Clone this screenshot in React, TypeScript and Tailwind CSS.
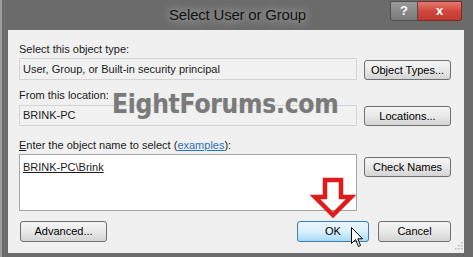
import type { ReactNode } from "react";

function WinButton({ children, className = "", primary = false }: { children: ReactNode; className?: string; primary?: boolean }) {
  return (
    <div
      className={`flex items-center justify-center rounded-[3px] border text-[11px] text-black ${
        primary
          ? "border-[#3c7fb1] bg-gradient-to-b from-[#eaf6fd] via-[#d9f0fc] to-[#a7d9f5]"
          : "border-[#707070] bg-gradient-to-b from-[#f5f5f5] via-[#e9e9e9] to-[#d4d4d4]"
      } ${className}`}
    >
      {children}
    </div>
  );
}

export default function App() {
  return (
    <div className="relative h-[257px] w-[473px] overflow-hidden bg-[#6b6b6b] font-['Liberation_Sans',Arial,sans-serif]">
      {/* title bar */}
      <div className="grid h-[30px] grid-cols-[1fr_auto_1fr] border-l-[2px] border-[#9c9c9c]">
        <div />
        <div className="self-center text-[15px] tracking-[-0.2px] text-[#141414] [text-shadow:0_0_8px_rgba(200,200,200,0.9),0_0_14px_rgba(170,170,170,0.8)]">
          Select User or Group
        </div>
        <div className="flex justify-end pr-[11px] pt-[1px]">
          <div className="flex h-[20px]">
            <div className="flex w-[28px] items-center justify-center rounded-bl-[3px] border border-[#4e4e4e] bg-gradient-to-b from-[#9a9a9a] to-[#7a7a7a] text-[13px] font-bold text-white">
              ?
            </div>
            <div className="flex w-[44px] items-center justify-center rounded-br-[3px] border border-l-0 border-[#7a2a24] bg-gradient-to-b from-[#e5786e] via-[#cf473d] to-[#c13a30] text-[13px] font-bold text-white">
              x
            </div>
          </div>
        </div>
      </div>

      {/* body */}
      <div className="flex h-[227px] border-l-[2px] border-[#9c9c9c] pl-[6px] pr-[9px] pb-[4px]">
        <div className="flex flex-1 flex-col bg-[#f0f0f0] pl-[11px] pr-[13px] pt-[11px] text-[11px] text-[#1a1a1a]">
          <div className="h-[16px] leading-[16px]">Select this object type:</div>
          <div className="mt-[1px] flex items-end justify-between">
            <div className="flex h-[22px] w-[338px] items-center border border-[#d4d4d4] bg-[#f1f1f1] pl-[3px]">
              User, Group, or Built-in security principal
            </div>
            <WinButton className="h-[20px] w-[87px]">Object Types...</WinButton>
          </div>

          <div className="mt-[7px] h-[16px] leading-[16px]">From this location:</div>
          <div className="mt-[2px] flex items-start justify-between">
            <div className="flex h-[21px] w-[338px] items-center border border-[#d4d4d4] bg-[#f1f1f1] pl-[3px]">
              BRINK-PC
            </div>
            <WinButton className="mt-[1px] h-[20px] w-[87px]">Locations...</WinButton>
          </div>

          <div className="mt-[11px] h-[16px] leading-[16px]">
            <span className="underline">E</span>nter the object name to select (
            <span className="text-[#2a6fb8] underline">examples</span>):
          </div>
          <div className="mt-[1px] flex items-start justify-between">
            <div className="h-[57px] w-[338px] border border-[#a5a5a5] bg-white pl-[3px] pt-[4px]">
              <span className="underline">BRINK-PC\Brink</span>
            </div>
            <WinButton className="mt-[3px] h-[20px] w-[87px]">Check Names</WinButton>
          </div>

          <div className="mt-[10px] flex items-center">
            <WinButton className="ml-[1px] h-[21px] w-[87px]">Advanced...</WinButton>
            <div className="flex-1" />
            <WinButton primary className="h-[21px] w-[72px]">OK</WinButton>
            <WinButton className="ml-[9px] h-[21px] w-[73px]">Cancel</WinButton>
          </div>
        </div>
      </div>

      {/* watermark */}
      <div className="pointer-events-none absolute left-[112px] top-[84px] origin-left scale-x-[0.87] font-['DejaVu_Sans',Verdana,sans-serif] text-[27px] font-bold tracking-[-0.3px] text-[#7a7a7a] [text-shadow:0_0_1px_#cfcfcf]">
        EightForums.com
      </div>

      {/* red arrow */}
      <svg className="absolute left-[310px] top-[175px]" width="46" height="45" viewBox="0 0 46 45">
        <polygon points="15,5 31,5 31,22 41,22 23,40 5,22 15,22" fill="none" stroke="#e01b1b" strokeWidth="4.5" strokeLinejoin="miter" />
      </svg>

      {/* mouse cursor */}
      <svg className="absolute left-[351px] top-[227px]" width="13" height="21" viewBox="0 0 13 21">
        <path d="M0.5 0.5 L0.5 16.5 L4.5 12.5 L7.5 19.5 L9.5 18.5 L6.8 11.8 L11.5 11.8 Z" fill="#fff" stroke="#000" strokeWidth="1" />
      </svg>

      {/* size grip */}
      <svg className="absolute left-[455px] top-[242px]" width="8" height="8" viewBox="0 0 8 8">
        <rect x="6" y="0" width="1.5" height="1.5" fill="#b5b5b5" />
        <rect x="3" y="3" width="1.5" height="1.5" fill="#b5b5b5" />
        <rect x="6" y="3" width="1.5" height="1.5" fill="#b5b5b5" />
        <rect x="0" y="6" width="1.5" height="1.5" fill="#b5b5b5" />
        <rect x="3" y="6" width="1.5" height="1.5" fill="#b5b5b5" />
        <rect x="6" y="6" width="1.5" height="1.5" fill="#b5b5b5" />
      </svg>
    </div>
  );
}
